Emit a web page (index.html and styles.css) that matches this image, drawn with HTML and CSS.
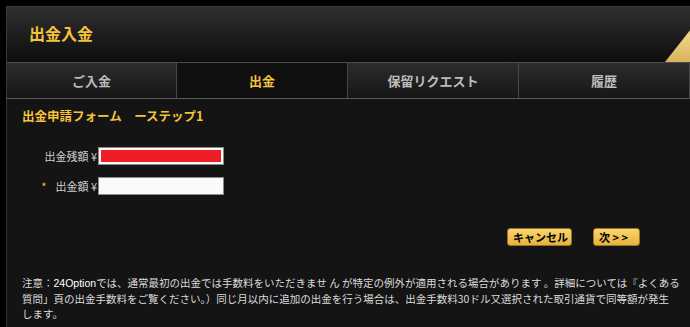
FILE: index.html
```html
<!DOCTYPE html>
<html lang="ja">
<head>
    <meta charset="UTF-8">
    <title>出金入金</title>
    <link rel="stylesheet" href="styles.css">
</head>
<body>
    <div class="page">
        <div class="header">
            <h1 class="title">出金入金</h1>
            <svg class="corner" width="32" height="33" viewBox="0 0 32 33">
                <defs>
                    <linearGradient id="gold" x1="0" y1="0" x2="0" y2="1">
                        <stop offset="0" stop-color="#f3dc8e"/>
                        <stop offset="1" stop-color="#d9b45c"/>
                    </linearGradient>
                </defs>
                <polygon points="0,33 26,0 32,0 32,33" fill="url(#gold)"/>
            </svg>
        </div>
        <div class="tabs">
            <div class="tab">ご入金</div>
            <div class="tab active">出金</div>
            <div class="tab">保留リクエスト</div>
            <div class="tab">履歴</div>
        </div>
        <div class="content">
            <h2 class="form-title">出金申請フォーム　ーステップ1</h2>
            <div class="form">
                <div class="row">
                    <label class="label">出金残額 ¥</label>
                    <div class="field balance"></div>
                </div>
                <div class="row">
                    <label class="label"><span class="req">*</span>出金額 ¥</label>
                    <input class="field" type="text">
                </div>
            </div>
            <div class="actions">
                <button class="btn cancel">キャンセル</button>
                <button class="btn next">次 &gt; &gt;</button>
            </div>
            <p class="note">注意：<span class="brand">24Option</span>では、通常最初の出金では手数料をいただきませ ん が特定の例外が適用される場合があります 。詳細については『よくある<br>質問」頁の出金手数料をご覧ください。）同じ月以内に追加の出金を行う場合は、出金手数料30ドル又選択された取引通貨で同等額が発生<br>します。</p>
        </div>
    </div>
</body>
</html>
```

FILE: styles.css
```css
* {
    margin: 0;
    padding: 0;
    box-sizing: border-box;
}

html, body {
    overflow: hidden;
}

body {
    background-color: #000;
    font-family: "Noto Sans CJK JP", sans-serif;
    height: 327px;
}

.page {
    margin: 6px 0 0 6px;
    width: 700px;
}

.header {
    position: relative;
    height: 56px;
    border: 1px solid #3a3a3a;
    border-bottom: none;
    background: linear-gradient(#2f2f2f, #0d0d0d);
    display: flex;
    align-items: center;
    padding-left: 22px;
}

.title {
    color: #f5c23c;
    font-size: 16px;
    font-weight: bold;
    line-height: 1;
    margin-top: -3px;
}

.corner {
    position: absolute;
    left: 658px;
    bottom: 0;
}

.tabs {
    display: grid;
    grid-template-columns: repeat(4, 171px);
    border-top: 1px solid #4a4a4a;
    border-bottom: 1px solid #5a5a5a;
    background: #111;
}

.tab {
    height: 35px;
    border-right: 1px solid #484848;
    background: linear-gradient(#2c2c2c, #161616);
    color: #bdbdbd;
    font-size: 13px;
    font-weight: bold;
    display: flex;
    align-items: center;
    justify-content: center;
}

.tab:first-child {
    border-left: 1px solid #3a3a3a;
}

.tab.active {
    background: #0f0f0f;
    color: #f5c23c;
}

.content {
    background-color: #141414;
    border-left: 1px solid #333;
    height: 240px;
    padding: 9px 0 0 15px;
}

.form-title {
    color: #f5c23c;
    font-size: 12.5px;
    font-weight: bold;
    line-height: 16px;
}

.form {
    margin-top: 23px;
    display: flex;
    flex-direction: column;
    gap: 12px;
}

.row {
    display: flex;
    align-items: center;
    margin-left: -15px;
}

.label {
    width: 91px;
    text-align: right;
    color: #cfcfcf;
    font-size: 11px;
    padding-right: 1px;
}

.req {
    color: #f5c23c;
    margin-right: 9px;
}

.field {
    width: 126px;
    height: 18px;
    border: 1px solid #8a8a8a;
    background: #fafafa;
}

.balance {
    padding: 2px;
}

.balance::after {
    content: "";
    display: block;
    height: 100%;
    background: #ee1c25;
}

.actions {
    display: flex;
    gap: 21px;
    margin: 33px 0 0 485px;
}

.btn {
    height: 18px;
    border: 1px solid #9a7424;
    border-radius: 3px;
    background: linear-gradient(#f9d56e, #e7b23c);
    color: #000;
    font-family: "Noto Sans CJK JP", sans-serif;
    font-size: 11px;
    font-weight: bold;
    line-height: 1;
    text-align: left;
    padding-left: 5px;
}

.cancel {
    width: 65px;
}

.next {
    width: 47px;
}

.note {
    margin-top: 29px;
    color: #dcdcdc;
    font-size: 10.5px;
    line-height: 15px;
    white-space: nowrap;
}

.brand {
    color: #fff;
    font-family: "Liberation Sans", sans-serif;
}
```
